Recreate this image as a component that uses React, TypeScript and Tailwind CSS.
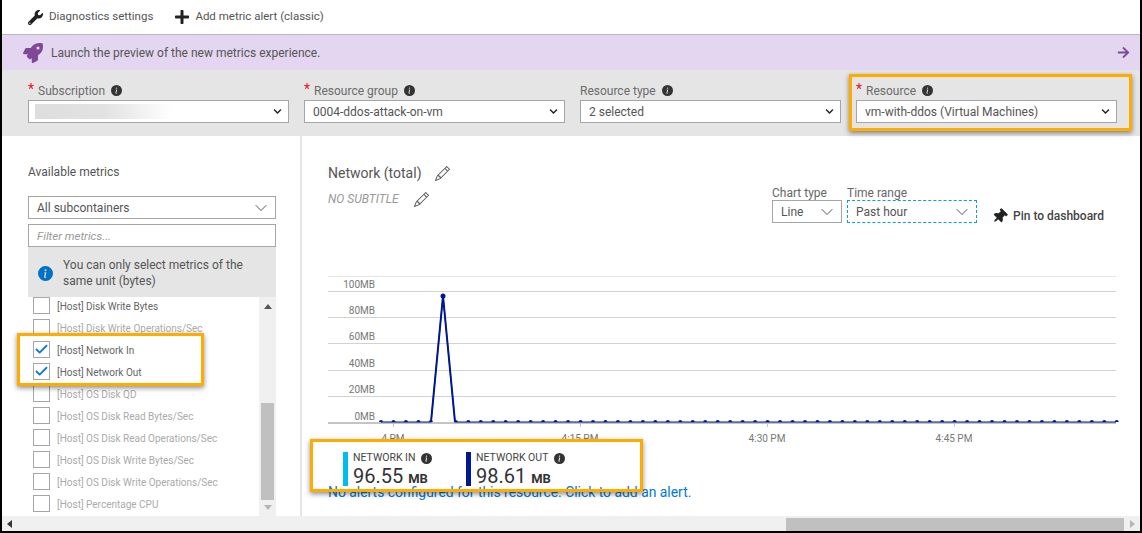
import React from 'react';
import { FaWrench, FaPlus, FaRocket, FaArrowRight, FaThumbtack, FaChevronDown } from 'react-icons/fa';
import { BsInfoCircleFill, BsPencil } from 'react-icons/bs';
import { ChevronDown, Check } from 'lucide-react';

const metrics = [
  { name: '[Host] Disk Write Bytes', tone: 'text-[#666]' },
  { name: '[Host] Disk Write Operations/Sec', tone: 'text-[#aaa]' },
  { name: '[Host] Network In', tone: 'text-[#666]', checked: true },
  { name: '[Host] Network Out', tone: 'text-[#666]', checked: true },
  { name: '[Host] OS Disk QD', tone: 'text-[#aaa]' },
  { name: '[Host] OS Disk Read Bytes/Sec', tone: 'text-[#aaa]' },
  { name: '[Host] OS Disk Read Operations/Sec', tone: 'text-[#aaa]' },
  { name: '[Host] OS Disk Write Bytes/Sec', tone: 'text-[#aaa]' },
  { name: '[Host] OS Disk Write Operations/Sec', tone: 'text-[#aaa]' },
  { name: '[Host] Percentage CPU', tone: 'text-[#aaa]' },
];

const filters = [
  { label: 'Subscription', required: true, value: '' },
  { label: 'Resource group', required: true, value: '0004-ddos-attack-on-vm' },
  { label: 'Resource type', required: false, value: '2 selected' },
  { label: 'Resource', required: true, value: 'vm-with-ddos (Virtual Machines)' },
];

const gridY = [291, 317, 343, 370, 396];
const gridLabels = ['100MB', '80MB', '60MB', '40MB', '20MB'];
const ticks = [
  { x: 393, label: '4 PM' },
  { x: 580, label: '4:15 PM' },
  { x: 767, label: '4:30 PM' },
  { x: 954, label: '4:45 PM' },
];
const dots = Array.from({ length: 60 }, (_, i) => 381 + i * 12.47).filter((_, i) => i !== 5);

function Info({ className = '' }: { className?: string }) {
  return <BsInfoCircleFill className={`text-[11px] text-[#333] ${className}`} />;
}

function FilterField({ label, required, value }: { label: string; required: boolean; value: string }) {
  return (
    <div className="w-[261px]">
      <div className="flex h-[21px] items-center pt-[2px] text-xs text-[#6b6b6b]">
        {required && <span className="mr-1 -mt-1 text-sm leading-none text-[#e81123]">*</span>}
        <span>{label}</span>
        <Info className="ml-[6px]" />
      </div>
      <div className="flex h-[23px] items-center justify-between border border-[#a6a6a6] bg-white pl-2 pr-[6px] text-xs text-[#555]">
        {value ? <span>{value}</span> : <span className="-ml-[2px] h-[15px] w-[138px] bg-gradient-to-r from-[#dedede] via-[#e2e2e2] to-white" />}
        <FaChevronDown className="text-[9px] text-[#222]" />
      </div>
    </div>
  );
}

function Select({ value, width, className = '' }: { value: string; width: string; className?: string }) {
  return (
    <div className={`flex h-[23px] items-center justify-between pl-2 pr-[4px] text-xs text-[#555] ${width} ${className}`}>
      <span>{value}</span>
      <ChevronDown size={20} strokeWidth={1} className="text-[#333]" />
    </div>
  );
}

function MetricRow({ name, tone, checked }: { name: string; tone: string; checked?: boolean }) {
  return (
    <div className="flex h-[22px] items-start pl-[5px]">
      <div className="flex h-[17px] w-[17px] shrink-0 items-center justify-center border border-[#a6a6a6] bg-white">
        {checked && <Check size={15} strokeWidth={3} className="text-[#0f7bd6]" />}
      </div>
      <span className={`ml-[7px] text-[10px] leading-[20px] ${tone}`}>{name}</span>
    </div>
  );
}

function Chart() {
  return (
    <svg width="810" height="175" viewBox="328 270 810 175" className="block" style={{ fontFamily: 'Roboto, sans-serif' }}>
      <line x1="328" x2="1116" y1="276.5" y2="276.5" stroke="#e6e6e6" />
      {gridY.map((y, i) => (
        <g key={y}>
          <line x1="328" x2="1116" y1={y + 0.5} y2={y + 0.5} stroke="#d2d2d2" />
          <text x="375" y={y - 3} textAnchor="end" fontSize="10" fill="#777">{gridLabels[i]}</text>
        </g>
      ))}
      <line x1="328" x2="1116" y1="423" y2="423" stroke="#c4c4c4" strokeWidth="2" />
      <text x="375" y="420" textAnchor="end" fontSize="10" fill="#777">0MB</text>
      {ticks.map(t => (
        <g key={t.x}>
          <line x1={t.x + 0.5} x2={t.x + 0.5} y1="424" y2="427" stroke="#c4c4c4" />
          <text x={t.x} y="442" textAnchor="middle" fontSize="10" fill="#777">{t.label}</text>
        </g>
      ))}
      <polyline points="381,422 431,422 443,296 455,422 1116,422" fill="none" stroke="#00188f" strokeWidth="1.1" />
      <polyline points="431,422 443,296 455,422" fill="none" stroke="#00188f" strokeWidth="2" />
      {dots.map(x => (
        <path key={x} d={`M${x - 2} 422a2 2 0 0 1 4 0z`} fill="#00188f" />
      ))}
      <circle cx="443" cy="296" r="2.5" fill="#00188f" />
    </svg>
  );
}

function LegendItem({ label, value, bar, width }: { label: string; value: string; bar: string; width: string }) {
  return (
    <div className={`flex ${width}`}>
      <span className={`h-[34px] w-[5px] ${bar}`} />
      <div className="ml-[5px]">
        <div className="flex h-[12px] items-center text-[10.5px] text-[#444]">{label}<Info className="ml-[6px]" /></div>
        <div className="mt-[3px] text-[20px] leading-[19px] text-[#333]">{value} <span className="text-[13px] font-bold">MB</span></div>
      </div>
    </div>
  );
}

export default function App() {
  return (
    <div className="relative flex h-[533px] w-[1142px] flex-col overflow-hidden border-x-2 border-b-2 border-black bg-white font-['Roboto',sans-serif]">
      <div className="flex h-[35px] shrink-0 items-center border-b border-[#b8b8b8] pl-[26px] text-[11.5px] text-[#555]">
        <FaWrench className="text-[15px] text-[#222]" />
        <span className="ml-[6px]">Diagnostics settings</span>
        <FaPlus className="ml-[21px] text-[16px] text-[#222]" />
        <span className="ml-[5px]">Add metric alert (classic)</span>
      </div>

      <div className="flex h-[35px] shrink-0 items-center justify-between bg-[#e4d6f0] pl-[21px] pr-[10px] text-xs text-[#555]">
        <div className="flex items-center">
          <FaRocket className="text-[20px] text-[#804998]" />
          <span className="ml-[8px]">Launch the preview of the new metrics experience.</span>
        </div>
        <FaArrowRight className="text-[13px] text-[#804998]" />
      </div>

      <div className="flex h-[66px] shrink-0 gap-[15px] bg-[#e5e5e5] pl-[26px] pt-[9px]">
        {filters.map(f => (
          <FilterField key={f.label} {...f} />
        ))}
      </div>

      <div className="flex min-h-0 flex-1">
        <div className="w-[300px] shrink-0 border-r-2 border-[#e5e5e5] pl-[26px] pr-[24px]">
          <div className="pt-[28px] text-xs text-[#555]">Available metrics</div>
          <Select value="All subcontainers" width="w-full" className="mt-[16px] border border-[#a6a6a6]" />
          <div className="mt-[5px] flex h-[23px] items-center border border-[#a6a6a6] pl-2 pt-[2px] text-[11.5px] italic text-[#999]">Filter metrics...</div>
          <div className="flex h-[50px] items-center bg-[#e5e5e5] pl-[10px] pr-4 pt-[2px] text-xs leading-[16px] text-[#555]">
            <BsInfoCircleFill className="shrink-0 text-[15px] text-[#0072c6]" />
            <span className="ml-[10px]">You can only select metrics of the same unit (bytes)</span>
          </div>
          <div className="flex h-[219px] overflow-hidden">
            <div className="min-w-0 flex-1">
              {metrics.map(m => (
                <MetricRow key={m.name} {...m} />
              ))}
            </div>
            <div className="flex w-[17px] shrink-0 flex-col items-center bg-[#f0f0f0] pt-[7px]">
              <span className="h-0 w-0 border-x-[4px] border-b-[5px] border-x-transparent border-b-[#555]" />
              <span className="mt-[94px] h-[97px] w-[13px] bg-[#c0c0c0]" />
              <span className="mt-[5px] h-0 w-0 border-x-[4px] border-t-[5px] border-x-transparent border-t-[#b5b5b5]" />
            </div>
          </div>
        </div>

        <div className="min-w-0 flex-1 pl-[26px]">
          <div className="flex h-[134px] justify-between pr-[34px]">
            <div className="pt-[27px]">
              <div className="flex items-center text-[14px] text-[#555]">
                Network (total)
                <BsPencil className="ml-[13px] text-[15px] text-[#555]" />
              </div>
              <div className="mt-[7px] flex items-center text-xs italic text-[#999]">
                NO SUBTITLE
                <BsPencil className="ml-[15px] text-[15px] not-italic text-[#555]" />
              </div>
            </div>
            <div className="flex items-start gap-[5px] pt-[49px]">
              <div>
                <div className="h-[15px] text-xs leading-[17px] text-[#666]">Chart type</div>
                <Select value="Line" width="w-[70px]" className="border border-[#a6a6a6]" />
              </div>
              <div>
                <div className="h-[15px] text-xs leading-[17px] text-[#666]">Time range</div>
                <Select value="Past hour" width="w-[130px]" className="border border-dashed border-[#0a9fdc]" />
              </div>
              <div className="ml-[10px] mt-[23px] flex items-center text-xs font-medium text-[#444]">
                <FaThumbtack className="rotate-45 text-[15px] text-[#222]" />
                <span className="ml-[6px] w-[93px]">Pin to dashboard</span>
              </div>
            </div>
          </div>

          <Chart />

          <div className="ml-[15px] mt-[7px] flex h-[34px]">
            <LegendItem label="NETWORK IN" value="96.55" bar="bg-[#00bcf2]" width="w-[123px]" />
            <LegendItem label="NETWORK OUT" value="98.61" bar="bg-[#00188f]" width="" />
          </div>
          <div className="text-[13.9px] leading-[13px] text-[#0078d4]">No alerts configured for this resource. Click to add an alert.</div>
        </div>
      </div>

      <div className="flex h-[15px] shrink-0 items-end bg-[#f0f0f0]">
        <span className="ml-[5px] h-0 w-0 self-center border-y-[4px] border-r-[5px] border-y-transparent border-r-[#333]" />
        <span className="ml-[774px] h-[13px] w-[338px] bg-[#c0c0c0]" />
        <span className="ml-[6px] h-0 w-0 self-center border-y-[4px] border-l-[5px] border-y-transparent border-l-[#b5b5b5]" />
      </div>

      <div className="absolute left-[847px] top-[74px] h-[57px] w-[283px] border-[3px] border-[#ffab00] shadow-[0_2px_5px_rgba(0,0,0,0.45)]" />
      <div className="absolute left-[15px] top-[333px] h-[53px] w-[187px] border-[3px] border-[#ffab00] shadow-[0_2px_5px_rgba(0,0,0,0.45)]" />
      <div className="absolute left-[308px] top-[439px] h-[53px] w-[333px] border-[3px] border-[#ffab00] shadow-[0_2px_5px_rgba(0,0,0,0.45)]" />
    </div>
  );
}
